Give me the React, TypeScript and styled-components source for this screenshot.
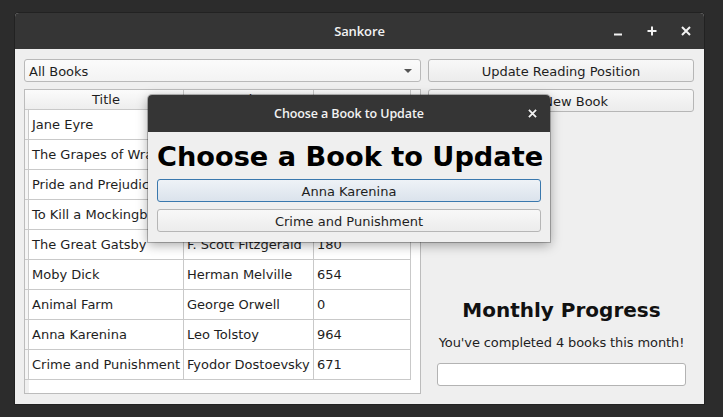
import styled, { createGlobalStyle, css } from "styled-components";

const GlobalStyle = createGlobalStyle`
  html, body {
    margin: 0;
    padding: 0;
    background: #2c2c2c;
    width: 723px;
    height: 417px;
    overflow: hidden;
  }
  * {
    box-sizing: border-box;
  }
`;

const Page = styled.div`
  position: relative;
  width: 723px;
  height: 417px;
  padding: 13px 0 0 15px;
  font-family: "DejaVu Sans", "Noto Sans", sans-serif;
  font-size: 13px;
  color: #1e1e1e;
`;

const Window = styled.div`
  width: 689px;
  height: 391px;
  display: flex;
  flex-direction: column;
  border-radius: 4px 4px 0 0;
  overflow: hidden;
  background: #efefef;
  box-shadow: 0 0 0 1px #222;
`;

const TitleBar = styled.div<{ $height: number }>`
  height: ${({ $height }) => $height}px;
  flex: 0 0 auto;
  background: #353535;
  display: grid;
  grid-template-columns: 1fr auto 1fr;
  align-items: center;
  color: #f2f2f2;
  font-family: "Open Sans", "Noto Sans", sans-serif;
  font-weight: 600;
`;

const TitleText = styled.div<{ $size: number }>`
  grid-column: 2;
  font-size: ${({ $size }) => $size}px;
  letter-spacing: -0.1px;
  white-space: nowrap;
`;

const Controls = styled.div<{ $gap: number; $pad: number }>`
  grid-column: 3;
  justify-self: end;
  display: flex;
  gap: ${({ $gap }) => $gap}px;
  padding-right: ${({ $pad }) => $pad}px;
`;

const ControlButton = styled.div`
  width: 20px;
  height: 20px;
  display: flex;
  align-items: center;
  justify-content: center;
`;

const Body = styled.div`
  flex: 1;
  display: flex;
  gap: 7px;
  padding: 10px 10px 10px 9px;
`;

const LeftColumn = styled.div`
  flex: 0 0 397px;
  display: flex;
  flex-direction: column;
  gap: 7px;
`;

const RightColumn = styled.div`
  flex: 1;
  min-width: 0;
  display: flex;
  flex-direction: column;
  gap: 7px;
`;

const ComboBox = styled.div`
  height: 23px;
  flex: 0 0 auto;
  border: 1px solid #b9b9b9;
  border-radius: 3px;
  background: linear-gradient(#fbfbfb, #f3f3f3);
  display: flex;
  align-items: center;
  justify-content: space-between;
  padding: 1px 8px 0 4px;
`;

const Arrow = styled.div`
  width: 0;
  height: 0;
  border-left: 4px solid transparent;
  border-right: 4px solid transparent;
  border-top: 4px solid #555;
`;

const PushButton = styled.div<{ $focused?: boolean }>`
  height: 23px;
  flex: 0 0 auto;
  border: 1px solid #b6b6b6;
  border-radius: 3px;
  background: linear-gradient(#f8f8f8, #ececec);
  display: flex;
  align-items: center;
  justify-content: center;
  padding-top: 1px;
  color: #1e1e1e;
  white-space: nowrap;
  ${({ $focused }) =>
    $focused &&
    css`
      border-color: #3a78ad;
      background: linear-gradient(#eef2f7, #dbe3ec);
    `}
`;

const TableFrame = styled.div`
  flex: 1;
  border: 1px solid #bcbcbc;
  background: #fff;
  display: flex;
  flex-direction: column;
  overflow: hidden;
`;

const HeaderRow = styled.div`
  height: 20px;
  flex: 0 0 auto;
  display: flex;
  background: linear-gradient(#fbfbfb, #ededed);
`;

const HeaderCell = styled.div<{ $width: number; $offset?: number }>`
  width: ${({ $width }) => $width}px;
  flex: 0 0 auto;
  border-right: 1px solid #c9c9c9;
  border-bottom: 1px solid #c9c9c9;
  display: flex;
  align-items: center;
  justify-content: center;
  padding-left: ${({ $offset }) => $offset ?? 0}px;
`;

const HeaderFiller = styled.div`
  flex: 1;
  border-bottom: 1px solid #c9c9c9;
`;

const Row = styled.div`
  height: 30px;
  flex: 0 0 auto;
  display: flex;
`;

const RowStub = styled.div`
  width: 4px;
  flex: 0 0 auto;
  background: #f5f5f5;
  border-right: 1px solid #c9c9c9;
  border-bottom: 1px solid #c9c9c9;
`;

const Cell = styled.div<{ $width: number }>`
  width: ${({ $width }) => $width}px;
  flex: 0 0 auto;
  border-right: 1px solid #c9c9c9;
  border-bottom: 1px solid #c9c9c9;
  display: flex;
  align-items: center;
  padding-left: 3px;
  white-space: nowrap;
  overflow: hidden;
`;

const TableRest = styled.div`
  flex: 1;
  display: flex;
`;

const RestStub = styled.div`
  width: 4px;
  background: #f0f0f0;
`;

const Spacer = styled.div`
  flex: 1;
`;

const ProgressGroup = styled.div`
  display: flex;
  flex-direction: column;
  align-items: stretch;
  text-align: center;
  padding: 0 8px 8px 9px;
`;

const ProgressHeading = styled.div`
  font-size: 20px;
  font-weight: bold;
  line-height: 24px;
  color: #111;
  margin-bottom: 13px;
  white-space: nowrap;
`;

const ProgressText = styled.div`
  line-height: 16px;
  margin-bottom: 12px;
  white-space: nowrap;
  letter-spacing: -0.1px;
`;

const ProgressBar = styled.div`
  height: 23px;
  border: 1px solid #b3b3b3;
  border-radius: 3px;
  background: #fff;
`;

const Dialog = styled.div`
  position: absolute;
  left: 148px;
  top: 95px;
  width: 402px;
  height: 147px;
  display: flex;
  flex-direction: column;
  border-radius: 4px 4px 0 0;
  overflow: hidden;
  background: #efefef;
  box-shadow: 0 3px 12px rgba(0, 0, 0, 0.35), 0 0 0 1px rgba(0, 0, 0, 0.25);
`;

const DialogBody = styled.div`
  flex: 1;
  display: flex;
  flex-direction: column;
  padding: 8px 9px 10px;
  gap: 7px;
`;

const DialogHeading = styled.div`
  font-size: 27.2px;
  font-weight: bold;
  line-height: 34px;
  text-align: center;
  color: #000;
  white-space: nowrap;
  margin-bottom: -2px;
`;

type Book = { title: string; author: string; pages: number };

const books: Book[] = [
  { title: "Jane Eyre", author: "Charlotte Brontë", pages: 532 },
  { title: "The Grapes of Wrath", author: "John Steinbeck", pages: 464 },
  { title: "Pride and Prejudice", author: "Jane Austen", pages: 279 },
  { title: "To Kill a Mockingbird", author: "Harper Lee", pages: 281 },
  { title: "The Great Gatsby", author: "F. Scott Fitzgerald", pages: 180 },
  { title: "Moby Dick", author: "Herman Melville", pages: 654 },
  { title: "Animal Farm", author: "George Orwell", pages: 0 },
  { title: "Anna Karenina", author: "Leo Tolstoy", pages: 964 },
  { title: "Crime and Punishment", author: "Fyodor Dostoevsky", pages: 671 },
];

const MinusIcon = () => (
  <svg width="10" height="10" viewBox="0 0 10 10">
    <path d="M1 8.5h8" stroke="#f2f2f2" strokeWidth="2" />
  </svg>
);

const PlusIcon = () => (
  <svg width="10" height="10" viewBox="0 0 10 10">
    <path d="M0.5 5h9M5 0.5v9" stroke="#f2f2f2" strokeWidth="2" />
  </svg>
);

const CloseIcon = ({ size = 10 }: { size?: number }) => (
  <svg width={size} height={size} viewBox="0 0 10 10">
    <path d="M1 1l8 8M9 1l-8 8" stroke="#f2f2f2" strokeWidth="2" />
  </svg>
);

export default function App() {
  return (
    <>
      <GlobalStyle />
      <Page>
        <Window>
          <TitleBar $height={36}>
            <TitleText $size={13}>Sankore</TitleText>
            <Controls $gap={14} $pad={8}>
              <ControlButton>
                <MinusIcon />
              </ControlButton>
              <ControlButton>
                <PlusIcon />
              </ControlButton>
              <ControlButton>
                <CloseIcon />
              </ControlButton>
            </Controls>
          </TitleBar>
          <Body>
            <LeftColumn>
              <ComboBox>
                <span>All Books</span>
                <Arrow />
              </ComboBox>
              <TableFrame>
                <HeaderRow>
                  <HeaderCell $width={159} $offset={4}>
                    Title
                  </HeaderCell>
                  <HeaderCell $width={130}>Author</HeaderCell>
                  <HeaderCell $width={97}>Pages</HeaderCell>
                  <HeaderFiller />
                </HeaderRow>
                {books.map((b) => (
                  <Row key={b.title}>
                    <RowStub />
                    <Cell $width={155}>{b.title}</Cell>
                    <Cell $width={130}>{b.author}</Cell>
                    <Cell $width={97}>{b.pages}</Cell>
                  </Row>
                ))}
                <TableRest>
                  <RestStub />
                </TableRest>
              </TableFrame>
            </LeftColumn>
            <RightColumn>
              <PushButton>Update Reading Position</PushButton>
              <PushButton>Add New Book</PushButton>
              <Spacer />
              <ProgressGroup>
                <ProgressHeading>Monthly Progress</ProgressHeading>
                <ProgressText>You've completed 4 books this month!</ProgressText>
                <ProgressBar />
              </ProgressGroup>
            </RightColumn>
          </Body>
        </Window>

        <Dialog>
          <TitleBar $height={37}>
            <TitleText $size={12.5}>Choose a Book to Update</TitleText>
            <Controls $gap={0} $pad={8}>
              <ControlButton>
                <CloseIcon size={9} />
              </ControlButton>
            </Controls>
          </TitleBar>
          <DialogBody>
            <DialogHeading>Choose a Book to Update</DialogHeading>
            <PushButton $focused>Anna Karenina</PushButton>
            <PushButton>Crime and Punishment</PushButton>
          </DialogBody>
        </Dialog>
      </Page>
    </>
  );
}
